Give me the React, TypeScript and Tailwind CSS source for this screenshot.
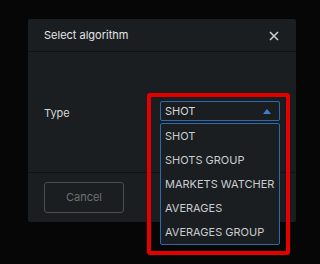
import React from 'react';

const options = ['SHOT', 'SHOTS GROUP', 'MARKETS WATCHER', 'AVERAGES', 'AVERAGES GROUP'];

export default function App() {
  return (
    <div className="w-[320px] h-[264px] overflow-hidden bg-[#060606] pt-[19px] pl-[28px] font-['Inter',sans-serif]">
      <div className="w-[268px] h-[203px] bg-[#1b1e20] flex flex-col rounded-[2px]">
        <div className="h-[33px] shrink-0 flex items-center justify-between px-4 pt-[1px] border-b border-[#111315]">
          <span className="text-[11px] text-[#e4e6e8]">Select algorithm</span>
          <svg width="10" height="10" viewBox="0 0 10 10" className="mr-[1px]">
            <path d="M1 1L9 9M9 1L1 9" stroke="#c9cdd0" strokeWidth="1.6" />
          </svg>
        </div>
        <div className="h-[121px] shrink-0 flex items-start px-4 pt-[49px] border-b border-[#111315]">
          <span className="w-[116px] text-[11px] text-[#d2d5d8] mt-[4px]">Type</span>
          <div className="relative w-[120px]">
            <div className="h-[20px] flex items-center justify-between pl-[4px] pr-[8px] border border-[#2f69ad] rounded-[2px] bg-[#1b1e20]">
              <span className="text-[11px] text-[#d6d9dc]">SHOT</span>
              <svg width="8" height="5" viewBox="0 0 8 5">
                <path d="M0 5L4 0L8 5Z" fill="#3f7fd0" />
              </svg>
            </div>
            <ul className="absolute left-0 top-[22px] w-[120px] border border-[#2f69ad] rounded-[2px] bg-[#1b1e20] z-10">
              {options.map((o) => (
                <li key={o} className="h-[24px] flex items-center pl-[4px] text-[11px] text-[#c9cdd1] whitespace-nowrap">
                  {o}
                </li>
              ))}
            </ul>
            <div className="absolute left-[-13px] top-[-8px] w-[143px] h-[162px] border-[4px] border-[#e50000] rounded-[3px] z-20 pointer-events-none" />
          </div>
        </div>
        <div className="flex-1 px-4 pt-[9px]">
          <button className="w-[80px] h-[31px] border border-[#4a4e52] rounded-[3px] text-[11px] text-[#6d7175]">
            Cancel
          </button>
        </div>
      </div>
    </div>
  );
}
